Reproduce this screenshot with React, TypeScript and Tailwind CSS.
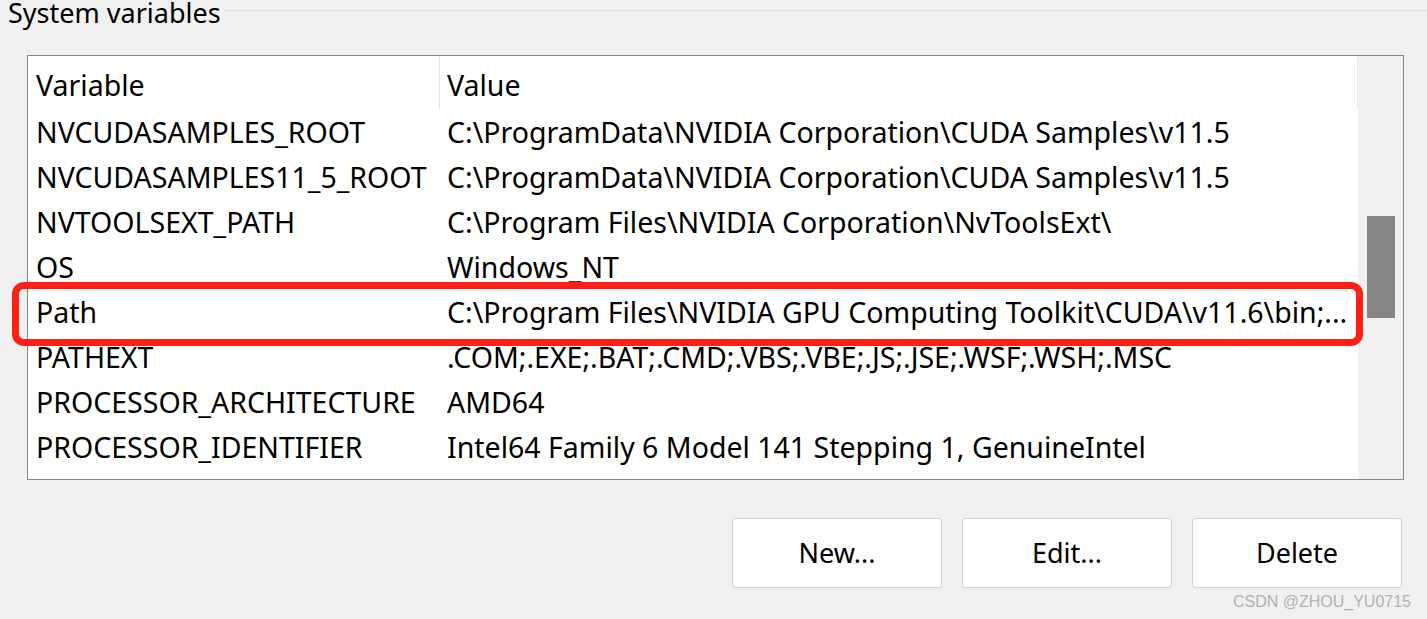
import React from "react";

// System variables list from the Windows environment-variables dialog.
const rows: [string, string][] = [
  ["NVCUDASAMPLES_ROOT", "C:\\ProgramData\\NVIDIA Corporation\\CUDA Samples\\v11.5"],
  ["NVCUDASAMPLES11_5_ROOT", "C:\\ProgramData\\NVIDIA Corporation\\CUDA Samples\\v11.5"],
  ["NVTOOLSEXT_PATH", "C:\\Program Files\\NVIDIA Corporation\\NvToolsExt\\"],
  ["OS", "Windows_NT"],
  ["Path", "C:\\Program Files\\NVIDIA GPU Computing Toolkit\\CUDA\\v11.6\\bin;..."],
  ["PATHEXT", ".COM;.EXE;.BAT;.CMD;.VBS;.VBE;.JS;.JSE;.WSF;.WSH;.MSC"],
  ["PROCESSOR_ARCHITECTURE", "AMD64"],
  ["PROCESSOR_IDENTIFIER", "Intel64 Family 6 Model 141 Stepping 1, GenuineIntel"],
];

const font = { fontFamily: '"Noto Sans", "Open Sans", sans-serif' };

export default function App() {
  return (
    <div
      className="relative h-[619px] w-[1427px] overflow-hidden bg-[#f0f0f0] text-black"
      style={font}
    >
      {/* group box title + rule */}
      <div className="flex h-[22px] items-center">
        <span className="pl-[8px] pr-[4px] pt-[3px] text-[27px] leading-none">System variables</span>
        <div className="mt-[-2px] h-px flex-1 bg-[#dcdcdc]" />
      </div>

      <div className="ml-[27px] mt-[33px] flex h-[425px] w-[1377px] border border-[#828790] bg-white">
        <div className="flex w-[1330px] flex-col overflow-hidden">
          {/* header */}
          <div className="flex h-[54px] shrink-0 items-center text-[28.5px]">
            <div className="w-[412px] self-stretch py-[1px]">
              <div className="flex h-full items-center border-r border-[#e5e5e5] pl-[8px] pt-[4px]">Variable</div>
            </div>
            <div className="w-[918px] self-stretch py-[1px]">
              <div className="flex h-full items-center border-r border-[#e5e5e5] pl-[7px] pt-[4px]">Value</div>
            </div>
          </div>
          {rows.map(([name, value]) => (
            <div key={name} className="flex h-[45px] shrink-0 items-center text-[28.5px]">
              <div className="w-[412px] whitespace-nowrap pl-[8px]">{name}</div>
              <div className="w-[918px] whitespace-nowrap pl-[7px]">{value}</div>
            </div>
          ))}
        </div>
        {/* scrollbar */}
        <div className="relative flex-1 border-l border-[#f5f5f5] bg-[#f0f0f0]">
          <div className="absolute left-[8px] top-[160px] h-[102px] w-[28px] bg-[#868686]" />
        </div>
      </div>

      {/* red highlight around Path */}
      <div className="absolute left-[12px] top-[282px] h-[64px] w-[1351px] rounded-[12px] border-[7px] border-[#ff2015]" />

      <div className="mr-[25px] mt-[38px] flex justify-end gap-[20px]">
        {["New...", "Edit...", "Delete"].map((label) => (
          <button
            key={label}
            type="button"
            className="flex h-[70px] w-[210px] items-center justify-center rounded-[3px] border border-[#d0d0d0] bg-[#fdfdfd] text-[27px]"
          >
            {label}
          </button>
        ))}
      </div>

      <div
        className="absolute bottom-[9px] right-[16px] text-[16px] leading-none text-[#b0b0b0]"
        style={{ fontFamily: '"Liberation Sans", Arial, sans-serif' }}
      >
        CSDN @ZHOU_YU0715
      </div>
    </div>
  );
}
